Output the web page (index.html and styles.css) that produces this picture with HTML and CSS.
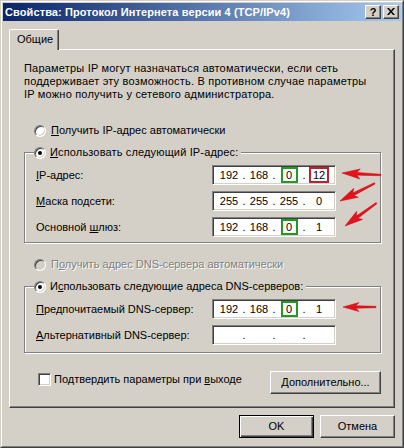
FILE: index.html
```html
<!DOCTYPE html>
<html lang="ru">
<head>
<meta charset="utf-8">
<title>Свойства: Протокол Интернета версии 4 (TCP/IPv4)</title>
<link rel="stylesheet" href="styles.css">
</head>
<body>
<div class="window">
  <div class="frame">
    <div class="titlebar">
      <span class="title">Свойства: Протокол Интернета версии 4 (TCP/IPv4)</span>
      <div class="caps">
        <div class="cap cap-help">?</div>
        <div class="cap cap-close">
          <svg width="8" height="7" viewBox="0 0 8 7"><path d="M0 0h2l2 2.4L6 0h2L5 3.5 8 7H6L4 4.6 2 7H0l3-3.5z" fill="#000"/></svg>
        </div>
      </div>
    </div>
    <div class="body">
      <div class="tabs"><div class="tab">Общие</div></div>
      <div class="panel">
        <p class="intro">Параметры IP могут назначаться автоматически, если сеть<br>поддерживает эту возможность. В противном случае параметры<br>IP можно получить у сетевого администратора.</p>

        <div class="opt opt-first"><span class="radio"></span><span><u>П</u>олучить IP-адрес автоматически</span></div>

        <div class="group group-ip">
          <div class="group-head"><span class="radio on"></span><span class="wide"><u>И</u>спользовать следующий IP-адрес:</span></div>
          <div class="row row-first">
            <span><u>I</u>P-адрес:</span>
            <div class="ip">
              <span class="seg">192</span><span class="dot">.</span><span class="seg">168</span><span class="dot">.</span><span class="seg"><span class="hl hl-green">0</span></span><span class="dot">.</span><span class="seg"><span class="hl hl-red">12</span></span>
            </div>
          </div>
          <div class="row">
            <span><u>М</u>аска подсети:</span>
            <div class="ip">
              <span class="seg">255</span><span class="dot">.</span><span class="seg">255</span><span class="dot">.</span><span class="seg">255</span><span class="dot">.</span><span class="seg">0</span>
            </div>
          </div>
          <div class="row">
            <span>Основной <u>ш</u>люз:</span>
            <div class="ip">
              <span class="seg">192</span><span class="dot">.</span><span class="seg">168</span><span class="dot">.</span><span class="seg"><span class="hl hl-green">0</span></span><span class="dot">.</span><span class="seg">1</span>
            </div>
          </div>
        </div>

        <div class="opt opt-dns disabled"><span class="radio off"></span><span>П<u>о</u>лучить адрес DNS-сервера автоматически</span></div>

        <div class="group group-dns">
          <div class="group-head"><span class="radio on"></span><span>И<u>с</u>пользовать следующие адреса DNS-серверов:</span></div>
          <div class="row row-first">
            <span><u>П</u>редпочитаемый DNS-сервер:</span>
            <div class="ip">
              <span class="seg">192</span><span class="dot">.</span><span class="seg">168</span><span class="dot">.</span><span class="seg"><span class="hl hl-green">0</span></span><span class="dot">.</span><span class="seg">1</span>
            </div>
          </div>
          <div class="row">
            <span><u>А</u>льтернативный DNS-сервер:</span>
            <div class="ip">
              <span class="seg"></span><span class="dot">.</span><span class="seg"></span><span class="dot">.</span><span class="seg"></span><span class="dot">.</span><span class="seg"></span>
            </div>
          </div>
        </div>

        <div class="bottom">
          <div class="check-row"><span class="check"></span><span>Подтвердить параметры при <u>в</u>ыходе</span></div>
          <div class="btn btn-adv"><span><u>Д</u>ополнительно...</span></div>
        </div>
      </div>
      <div class="footer">
        <div class="btn btn-default">OK</div>
        <div class="btn">Отмена</div>
      </div>
    </div>
  </div>
  <svg class="arrows" width="404" height="448" viewBox="0 0 404 448">
    <g fill="#e3121b" stroke="#c80c14" stroke-width="0.5" stroke-linejoin="round">
      <g transform="translate(342 173) rotate(3)"><polygon points="0,0 18,-5 15,-1.4 39,-0.7 39,0.7 15,1.4 18,5"/></g>
      <g transform="translate(340 201) rotate(-27)"><polygon points="0,0 18,-5 15,-1.4 39,-0.7 39,0.7 15,1.4 18,5"/></g>
      <g transform="translate(345 226) rotate(-36)"><polygon points="0,0 18,-5 15,-1.4 39,-0.7 39,0.7 15,1.4 18,5"/></g>
      <g transform="translate(343 307)"><polygon points="0,0 16,-4.5 13,-1.3 33,-0.7 33,0.7 13,1.3 16,4.5"/></g>
    </g>
  </svg>
</div>
</body>
</html>
```

FILE: styles.css
```css
* { box-sizing: border-box; }

html, body {
  margin: 0;
  padding: 0;
}

body {
  width: 404px;
  height: 448px;
  overflow: hidden;
  background: #d4d0c8;
  font: 11px/13px "Liberation Sans", Arial, sans-serif;
  color: #000;
}

u { text-decoration: underline; text-underline-offset: 1px; }

.window {
  position: relative;
  width: 404px;
  height: 448px;
  border: 1px solid;
  border-color: #d4d0c8 #404040 #404040 #d4d0c8;
}

.frame {
  height: 100%;
  border: 1px solid;
  border-color: #fff #808080 #808080 #fff;
  padding: 1px;
  display: flex;
  flex-direction: column;
}

.titlebar {
  height: 18px;
  display: flex;
  align-items: center;
  padding: 0 2px 0 2px;
  background: linear-gradient(to right, #0a246a, #a6caf0);
}

.title {
  color: #fff;
  font-weight: bold;
  font-size: 11px;
  letter-spacing: 0.1px;
  white-space: nowrap;
}

.caps {
  margin-left: auto;
  display: flex;
  gap: 2px;
}

.cap {
  width: 16px;
  height: 14px;
  background: #d4d0c8;
  border: 1px solid;
  border-color: #fff #404040 #404040 #fff;
  box-shadow: inset -1px -1px #808080;
  display: flex;
  align-items: center;
  justify-content: center;
}

.cap-help {
  font-weight: bold;
  font-size: 11px;
  line-height: 12px;
  padding-bottom: 1px;
}

.cap-close svg { display: block; margin-bottom: 1px; }

.body {
  flex: 1;
  padding: 8px 6px 0 6px;
}

.tabs { display: flex; }

.tab {
  position: relative;
  z-index: 1;
  width: 50px;
  height: 21px;
  margin-bottom: -1px;
  padding: 3px 0 0 7px;
  background: #d4d0c8;
  border: 1px solid;
  border-bottom: 0;
  border-color: #fff #404040 #fff #fff;
  border-radius: 2px 2px 0 0;
  box-shadow: inset -1px 0 #808080;
}

.panel {
  border: 1px solid;
  border-color: #fff #404040 #404040 #fff;
  box-shadow: inset -1px -1px #808080;
  padding: 12px 13px 13px 14px;
}

.intro {
  margin: 0;
  letter-spacing: 0.2px;
  white-space: nowrap;
}

.wide { letter-spacing: 0.15px; }

.opt {
  display: flex;
  align-items: center;
  height: 13px;
  gap: 5px;
  padding-left: 10px;
  white-space: nowrap;
}

.opt-first { margin-top: 23px; }
.opt-dns { margin-top: 15px; }

.disabled {
  color: #808080;
  text-shadow: 1px 1px 0 #fff;
}

.radio {
  position: relative;
  flex: none;
  width: 12px;
  height: 12px;
  border-radius: 50%;
  background: #fff;
  border: 1px solid;
  border-color: #808080 #fff #fff #808080;
  box-shadow: inset 1px 1px #404040, inset -1px -1px #d4d0c8;
}

.radio.off { background: #d4d0c8; }

.radio.on::after {
  content: "";
  position: absolute;
  left: 3px;
  top: 3px;
  width: 4px;
  height: 4px;
  border-radius: 50%;
  background: #000;
}

.group {
  border: 1px solid #808080;
  box-shadow: inset 1px 1px #fff, 1px 1px #fff;
  padding: 0 0 0 11px;
  margin-top: 15px;
}

.group-ip { padding-bottom: 5px; }
.group-dns { padding-bottom: 7px; }

.group-head {
  display: flex;
  align-items: center;
  gap: 4px;
  width: max-content;
  height: 13px;
  margin: -7px 0 0 -2px;
  padding: 0 3px 0 0;
  background: #d4d0c8;
  white-space: nowrap;
}

.row {
  display: grid;
  grid-template-columns: 176px 124px;
  align-items: center;
  height: 20px;
  margin-top: 6px;
  white-space: nowrap;
}

.ip {
  width: 124px;
  height: 20px;
  background: #fff;
  border: 1px solid;
  border-color: #808080 #fff #fff #808080;
  box-shadow: inset 1px 1px #404040, inset -1px -1px #d4d0c8;
  display: flex;
  align-items: center;
  padding: 0 4px;
}

.seg {
  width: 24px;
  height: 16px;
  display: flex;
  align-items: center;
  justify-content: center;
}

.dot {
  width: 6px;
  text-align: center;
}

.hl {
  height: 16px;
  border: 2px solid;
  display: flex;
  align-items: center;
  justify-content: center;
}

.hl-green { width: 17px; border-color: #1f9a22; }
.hl-red { width: 20px; border-color: #c3202a; }

.bottom {
  display: flex;
  align-items: flex-start;
  margin-top: 18px;
}

.check-row {
  display: flex;
  align-items: center;
  gap: 3px;
  height: 13px;
  margin: 2px 0 0 14px;
  white-space: nowrap;
}

.check {
  width: 13px;
  height: 13px;
  background: #fff;
  border: 1px solid;
  border-color: #808080 #fff #fff #808080;
  box-shadow: inset 1px 1px #404040, inset -1px -1px #d4d0c8;
}

.btn {
  width: 75px;
  height: 23px;
  display: flex;
  align-items: center;
  justify-content: center;
  background: #d4d0c8;
  border: 1px solid;
  border-color: #fff #404040 #404040 #fff;
  box-shadow: inset -1px -1px #808080;
  white-space: nowrap;
}

.btn-adv {
  margin-left: auto;
  width: 111px;
}

.btn-default {
  border: 1px solid #000;
  box-shadow: inset 1px 1px #fff, inset -1px -1px #404040, inset -2px -2px #808080;
}

.footer {
  display: flex;
  justify-content: flex-end;
  gap: 6px;
  margin-top: 7px;
}

.arrows {
  position: absolute;
  left: -1px;
  top: -1px;
  pointer-events: none;
}
```
